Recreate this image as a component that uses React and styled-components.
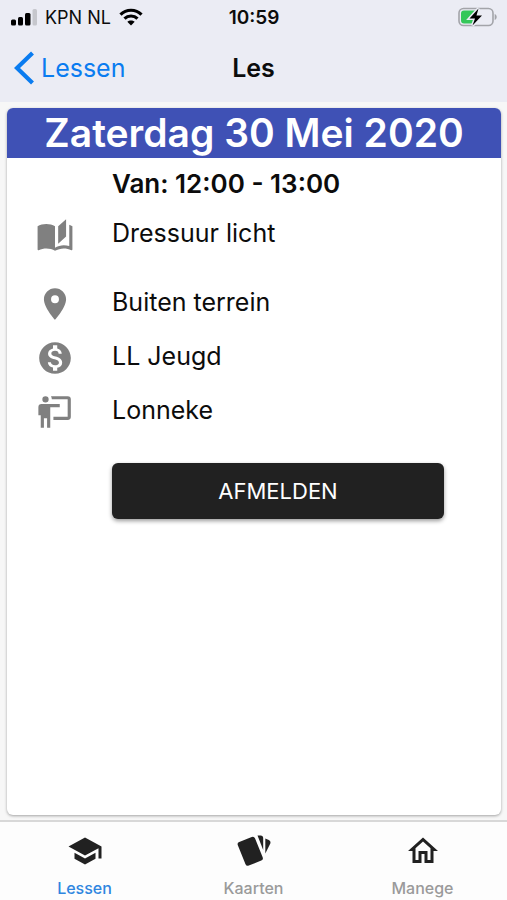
import React from 'react';
import styled, { createGlobalStyle } from 'styled-components';
import { MdLocationOn, MdMonetizationOn, MdSchool } from 'react-icons/md';

const theme = {
    primary: '#3f51b5',
    link: '#0a7cf0',
    active: '#2f86e0',
    inactive: '#9a9a9a',
    icon: '#808080',
    dark: '#212121',
    header: '#ebecf4',
    page: '#f7f7f7',
    font: 'Inter, "Liberation Sans", sans-serif',
};

const GlobalStyle = createGlobalStyle`
    * {
        box-sizing: border-box;
    }

    body {
        margin: 0;
        font-family: ${theme.font};
        color: #0c0c0c;
        background: ${theme.page};
    }
`;

const Screen = styled.div`
    display: flex;
    flex-direction: column;
    min-height: 100vh;
`;

const Header = styled.header`
    background: ${theme.header};
`;

const Columns = styled.div`
    display: grid;
    grid-template-columns: 1fr auto 1fr;
    align-items: center;
`;

const StatusBar = styled(Columns)`
    height: 34px;
    padding: 0 10px 0 11px;
    font-size: 18px;
`;

const Carrier = styled.div`
    display: flex;
    align-items: center;
    gap: 8px;
`;

const Clock = styled.span`
    font-size: 19px;
    font-weight: 600;
`;

const Battery = styled.svg`
    justify-self: end;
`;

const NavBar = styled(Columns)`
    height: 68px;
    padding: 0 14px;
`;

const BackLink = styled.a`
    display: flex;
    align-items: center;
    gap: 7px;
    color: ${theme.link};
    font-size: 25px;
    text-decoration: none;
`;

const NavTitle = styled.h1`
    margin: 0;
    font-size: 25px;
    font-weight: 600;
`;

const Content = styled.main`
    display: flex;
    flex: 1;
    padding: 6px 6px 5px 7px;
`;

const Card = styled.article`
    flex: 1;
    overflow: hidden;
    background: #fff;
    border-radius: 6px;
    box-shadow: 0 1px 3px rgba(0, 0, 0, 0.35);
`;

const CardTitle = styled.h2`
    margin: 0;
    background: ${theme.primary};
    color: #fff;
    font-size: 39px;
    font-weight: 600;
    line-height: 50px;
    text-align: center;
`;

const Time = styled.p`
    margin: 0;
    padding: 9px 16px 7px 105px;
    font-size: 26px;
    font-weight: 600;
    line-height: 34px;
`;

const Details = styled.ul`
    margin: 0;
    padding: 0;
    list-style: none;
`;

const Detail = styled.li`
    display: flex;
    gap: 38px;
    min-height: ${(props) => (props.$tall ? '69px' : '54px')};
    padding: 8px 16px 0 29px;
    font-size: 25px;
    line-height: 34px;

    svg {
        flex: none;
        width: 38px;
        height: 38px;
        fill: ${theme.icon};
    }
`;

const Actions = styled.div`
    padding: 24px 57px 24px 105px;
`;

const Button = styled.button`
    width: 100%;
    height: 56px;
    border: none;
    border-radius: 6px;
    background: ${theme.dark};
    color: #fff;
    font-family: inherit;
    font-size: 22px;
    box-shadow: 0 2px 4px rgba(0, 0, 0, 0.4);
    cursor: pointer;
`;

const TabBar = styled.nav`
    display: flex;
    height: 80px;
    border-top: 2px solid #d8d8d8;
    background: #fdfdfd;
`;

const Tab = styled.a`
    display: flex;
    flex: 1;
    flex-direction: column;
    align-items: center;
    gap: 9px;
    padding-top: 11px;
    color: ${(props) => (props.$active ? theme.active : theme.inactive)};
    font-size: 16px;
    font-weight: 500;
    line-height: 20px;
    text-decoration: none;

    svg {
        width: 36px;
        height: 36px;
        fill: ${theme.dark};
    }
`;

const SignalIcon = () => (
    <svg width="26" height="18" viewBox="0 0 26 18">
        <rect x="0" y="11.5" width="5" height="6" rx="1.5" />
        <rect x="7" y="9" width="5" height="8.5" rx="1.5" />
        <rect x="14" y="5" width="5.5" height="12.5" rx="1.5" />
        <rect x="21.500" y="1" width="4.5" height="16.5" rx="1.5" fill="#c6c7cd" />
    </svg>
);

const WifiIcon = () => (
    <svg width="24" height="18" viewBox="0 0 24 18" fill="none" stroke="#000" strokeWidth="3.2">
        <path d="M1.5 6.6C7.3 .8 16.7 .8 22.5 6.6" />
        <path d="M5.5 10.6C9.1 7.1 14.9 7.1 18.5 10.6" />
        <path d="M12 17.5L8.3 13.8C10.4 11.9 13.6 11.9 15.7 13.8Z" fill="#000" stroke="none" />
    </svg>
);

const BatteryIcon = () => (
    <Battery width="39" height="20" viewBox="0 0 39 20">
        <rect x="1" y="1.5" width="34" height="17" rx="4.5" fill="none" stroke="#a3a4a9" strokeWidth="1.6" />
        <path d="M36.7 7v6c1.300-.5 2-1.600 2-3s-.7-2.500-2-3z" fill="#a3a4a9" />
        <path d="M6 3.500h12v13H6A3 3 0 0 1 3 13.500v-7A3 3 0 0 1 6 3.500z" fill="#34c759" />
        <path d="M20.500 1.500L11.500 11.500h5.500L14.500 18.500L24 8.500h-5.500z" fill="#000" stroke={theme.header} strokeWidth="3" paintOrder="stroke" />
    </Battery>
);

const ChevronIcon = () => (
    <svg width="20" height="34" viewBox="0 0 20 34" fill="none" stroke="currentColor" strokeWidth="4.2">
        <path d="M18.500 2L3 17L18.500 32" />
    </svg>
);

const BookIcon = () => (
    <svg viewBox="0 0 24 24">
        <path d="M19 2L14 6.5V17.5L19 13V2M6.5 5C4.55 5 2.45 5.4 1 6.5V21.16C1 21.41 1.25 21.66 1.5 21.66C1.6 21.66 1.65 21.59 1.75 21.59C3.1 20.94 5.05 20.5 6.5 20.5C8.45 20.5 10.55 20.9 12 22C13.35 21.15 15.8 20.5 17.5 20.5C19.15 20.5 20.85 20.81 22.25 21.56C22.35 21.61 22.4 21.59 22.5 21.59C22.75 21.59 23 21.34 23 21.09V6.5C22.4 6.05 21.75 5.75 21 5.5V19C19.9 18.65 18.7 18.5 17.5 18.5C15.8 18.5 13.35 19.15 12 20V6.5C10.55 5.4 8.45 5 6.5 5Z" />
    </svg>
);

const TeachIcon = () => (
    <svg viewBox="0 0 24 24">
        <path d="M20 17A2 2 0 0 0 22 15V4A2 2 0 0 0 20 2H9.46C9.81 2.61 10 3.3 10 4H20V15H11V17M15 7V9H9V22H7V16H5V22H3V14H1.5V9A2 2 0 0 1 3.5 7H15M8 4A2 2 0 0 1 6 6A2 2 0 0 1 4 4A2 2 0 0 1 6 2A2 2 0 0 1 8 4Z" />
    </svg>
);

const CardsIcon = () => (
    <svg viewBox="0 0 36 36">
        <rect x="5" y="5.5" width="18.500" height="25.500" rx="2.500" transform="rotate(-22 14.250 18.250)" />
        <path d="M21.500 2.500h3.200c1.500 0 2.500 1 2.500 2.500v12z" />
        <path d="M29.300 5.500l3.500 1.500c1.500.7 2 2 1.500 3.500L29.300 20.500z" />
    </svg>
);

const HomeIcon = () => (
    <svg viewBox="0 0 24 24">
        <path d="M12 5.69L17 10.19V18H15V12H9V18H7V10.19L12 5.69M12 3L2 12H5V20H11V14H13V20H19V12H22" />
    </svg>
);

const App = () => (
    <>
        <GlobalStyle />
        <Screen>
            <Header>
                <StatusBar>
                    <Carrier>
                        <SignalIcon />
                        <span>KPN NL</span>
                        <WifiIcon />
                    </Carrier>
                    <Clock>10:59</Clock>
                    <BatteryIcon />
                </StatusBar>
                <NavBar>
                    <BackLink href="#lessen">
                        <ChevronIcon />
                        Lessen
                    </BackLink>
                    <NavTitle>Les</NavTitle>
                </NavBar>
            </Header>
            <Content>
                <Card>
                    <CardTitle>Zaterdag 30 Mei 2020</CardTitle>
                    <Time>Van: 12:00 - 13:00</Time>
                    <Details>
                        <Detail $tall>
                            <BookIcon />
                            Dressuur licht
                        </Detail>
                        <Detail>
                            <MdLocationOn />
                            Buiten terrein
                        </Detail>
                        <Detail>
                            <MdMonetizationOn />
                            LL Jeugd
                        </Detail>
                        <Detail>
                            <TeachIcon />
                            Lonneke
                        </Detail>
                    </Details>
                    <Actions>
                        <Button type="button">AFMELDEN</Button>
                    </Actions>
                </Card>
            </Content>
            <TabBar>
                <Tab href="#lessen" $active>
                    <MdSchool />
                    Lessen
                </Tab>
                <Tab href="#kaarten">
                    <CardsIcon />
                    Kaarten
                </Tab>
                <Tab href="#manege">
                    <HomeIcon />
                    Manege
                </Tab>
            </TabBar>
        </Screen>
    </>
);

export default App;
